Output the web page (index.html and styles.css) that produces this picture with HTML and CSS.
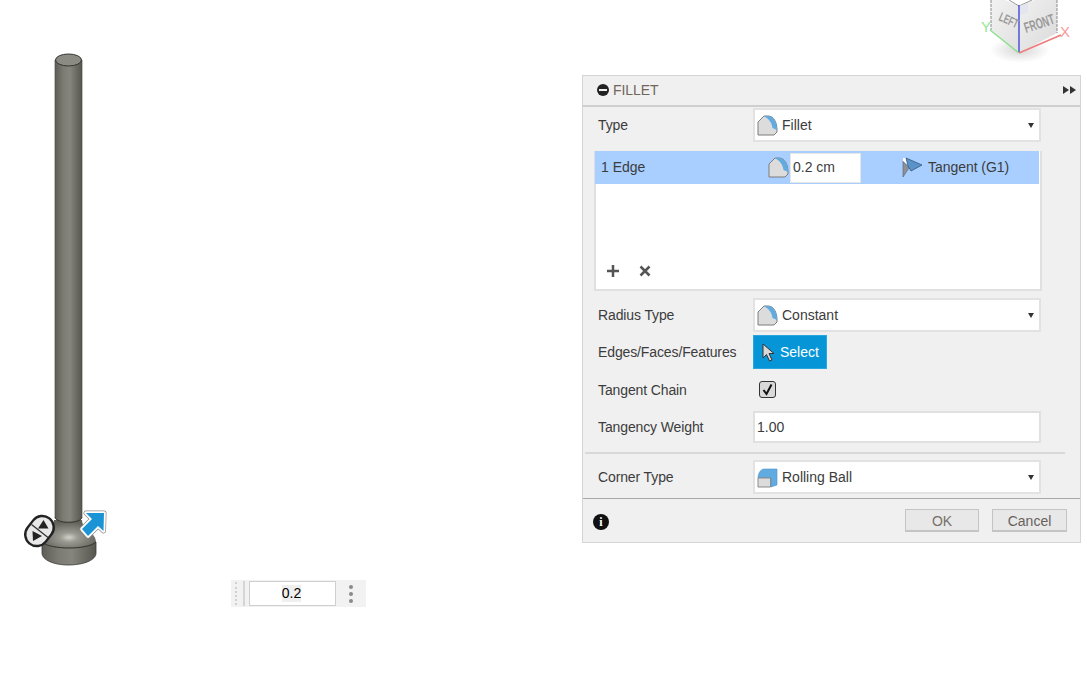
FILE: index.html
```html
<!DOCTYPE html>
<html lang="en">
<head>
<meta charset="utf-8">
<title>Fillet</title>
<link rel="stylesheet" href="styles.css">
</head>
<body>
<main class="canvas">
  <svg class="viewcube" width="112" height="70" viewBox="975 0 112 70">
    <defs>
      <linearGradient id="leftFace" x1="0" y1="0" x2="1" y2="1"><stop offset="0" stop-color="#f2f2f2"/><stop offset="1" stop-color="#e0e0e0"/></linearGradient>
      <linearGradient id="rightFace" x1="0" y1="0" x2="1" y2="1"><stop offset="0" stop-color="#f0f0f0"/><stop offset="1" stop-color="#dadada"/></linearGradient>
      <radialGradient id="cubeShadow"><stop offset="0" stop-color="#999" stop-opacity=".4"/><stop offset="1" stop-color="#999" stop-opacity="0"/></radialGradient>
    </defs>
    <ellipse cx="1020" cy="50" rx="30" ry="13" fill="url(#cubeShadow)"/>
    <path d="M991 0V30L1019 53V6L1005 0Z" fill="url(#leftFace)"/>
    <path d="M1057 0V33L1019 53V6L1034 0Z" fill="url(#rightFace)"/>
    <path d="M991 0V30M1057 0V33" stroke="#8a8a8a" stroke-width="1" stroke-dasharray="3 1" fill="none"/>
    <path d="M1009 0L1019 6L1032 0" stroke="#999" stroke-width="1" fill="none"/>
    <path d="M1019 6L1028 3V12L1019 16Z" fill="#e3e6ef"/>
    <path d="M1019 5V53" stroke="#4a55d8" stroke-width="1.5"/>
    <path d="M990 30L1019 53" stroke="#8fe08f" stroke-width="1.5"/>
    <path d="M1019 53L1061 35" stroke="#f07a7a" stroke-width="1.5"/>
    <text class="cube-label" transform="translate(998 20) rotate(24) scale(.8 1.25)">LEFT</text>
    <text class="cube-label cube-front" transform="translate(1026 33) rotate(-18) scale(.82 1.35)">FRONT</text>
    <text class="axis axis-y" x="981" y="32">Y</text>
    <text class="axis axis-x" x="1060" y="37">X</text>
  </svg>

  <svg class="model" width="100" height="530" viewBox="20 45 100 530">
    <defs>
      <linearGradient id="metal" x1="0" y1="0" x2="1" y2="0">
        <stop offset="0" stop-color="#5d5d56"/><stop offset=".3" stop-color="#7b7b74"/><stop offset=".55" stop-color="#85857e"/><stop offset="1" stop-color="#56564f"/>
      </linearGradient>
      <radialGradient id="flare" cx=".5" cy=".62" r=".55">
        <stop offset="0" stop-color="#d2d2ca"/><stop offset=".3" stop-color="#9a9a93"/><stop offset="1" stop-color="#62625b"/>
      </radialGradient>
    </defs>
    <path d="M42 542V553C42 560 54 565 68 565C84 565 96 560 96 553V542Z" fill="url(#metal)" stroke="#3b3b37" stroke-width=".8"/>
    <path d="M54 520C54 530 42 532 42 542C50 550 88 550 96 542C96 532 82 530 82 520Z" fill="url(#flare)"/>
    <path d="M42 542C50 550 88 550 96 542" fill="none" stroke="#33332f" stroke-width="1"/>
    <path d="M55 60H82V517C82 524 55 524 55 517Z" fill="url(#metal)"/>
    <path d="M55 517C55 524 82 524 82 517" fill="none" stroke="#33332f" stroke-width="1"/>
    <path d="M55 60V517M82 60V517" stroke="#4e4e48" stroke-width=".7"/>
    <ellipse cx="68.500" cy="60" rx="13" ry="6" fill="#8b8b84" stroke="#33332f" stroke-width="1"/>
    <rect class="handle-body" x="28" y="515" width="23" height="32" rx="11.500" transform="rotate(38 39.500 531)"/>
    <path d="M31.500 524.500L48 537.500" stroke="#333" stroke-width="1.300"/>
    <path d="M43.500 520L48.500 528.500H38Z" fill="#222"/>
    <path d="M32.500 531L42 536L33 541Z" fill="#222"/>
    <path class="arrow-edge" d="M86 513H104L103.500 531L98 526L88 536L82 529L92 519Z"/>
    <path class="arrow-rim" d="M86 513H104L103.500 531L98 526L88 536L82 529L92 519Z"/>
    <path class="arrow-fill" d="M86 513H104L103.500 531L98 526L88 536L82 529L92 519Z"/>
  </svg>

  <div class="floating-input">
    <span class="grip"></span>
    <span class="grip-line"></span>
    <div class="float-field"><span class="float-value">0.2</span></div>
    <span class="kebab"><i></i><i></i><i></i></span>
  </div>

  <section class="panel">
    <header class="panel-head">
      <span class="minus-icon"></span>
      <span class="panel-title">FILLET</span>
      <span class="expand">
        <svg width="13" height="8" viewBox="0 0 13 8"><path d="M0 0L6 4L0 8ZM7 0L13 4L7 8Z" fill="#333"/></svg>
      </span>
    </header>
    <div class="panel-body">
      <div class="row row-type">
        <label class="label">Type</label>
        <div class="select">
          <svg class="icon" width="21" height="21" viewBox="0 0 21 21"><use href="#fillet-icon"/></svg>
          <span>Fillet</span><span class="caret"></span>
        </div>
      </div>
      <div class="list">
        <div class="list-row">
          <span class="edge-name">1 Edge</span>
          <svg class="icon edge-icon" width="21" height="21" viewBox="0 0 21 21"><use href="#fillet-icon"/></svg>
          <span class="edge-input">0.2 cm</span>
          <svg class="icon flag-icon" width="21" height="21" viewBox="0 0 21 21">
            <path d="M1 4L7 11L1 20Z" fill="#8c9198" stroke="#5b6068" stroke-width=".6"/>
            <path d="M1 1H4L6 8L1 4Z" fill="#fff"/>
            <path d="M4 1L20 8L9 14L6 9Z" fill="#5a93c9" stroke="#37597c" stroke-width=".8"/>
          </svg>
          <span class="edge-kind">Tangent (G1)</span>
        </div>
        <div class="list-tools">
          <svg width="14" height="14" viewBox="0 0 14 14"><path d="M7 1V13M1 7H13" stroke="#555" stroke-width="2.500"/></svg>
          <svg width="12" height="12" viewBox="0 0 12 12"><path d="M1.500 1.500L10.500 10.500M10.500 1.500L1.500 10.500" stroke="#555" stroke-width="2.500"/></svg>
        </div>
      </div>
      <div class="row row-radius">
        <label class="label">Radius Type</label>
        <div class="select">
          <svg class="icon" width="21" height="21" viewBox="0 0 21 21"><use href="#fillet-icon"/></svg>
          <span>Constant</span><span class="caret"></span>
        </div>
      </div>
      <div class="row row-edges">
        <label class="label">Edges/Faces/Features</label>
        <button class="select-btn" type="button">
          <svg width="14" height="19" viewBox="0 0 14 19"><path d="M1 1V15L4.500 11.500L7.500 18L10 17L7 10.500H12Z" fill="#d8d8d8" stroke="#333" stroke-width="1"/></svg>
          <span>Select</span>
        </button>
      </div>
      <div class="row row-check">
        <label class="label">Tangent Chain</label>
        <span class="checkbox">
          <svg width="13" height="13" viewBox="0 0 13 13"><path d="M2.500 7L5.500 11L10.500 1.500" fill="none" stroke="#111" stroke-width="2"/></svg>
        </span>
      </div>
      <div class="row row-weight">
        <label class="label">Tangency Weight</label>
        <div class="text-field">1.00</div>
      </div>
      <div class="separator"></div>
      <div class="row row-corner">
        <label class="label">Corner Type</label>
        <div class="select">
          <svg class="icon" width="21" height="21" viewBox="0 0 21 21">
            <path d="M1 11C1 6 4 2 7 2H20V18L14 20V11Z" fill="#62abe0" stroke="#4d93cb" stroke-width=".6"/>
            <path d="M1 11H13.500V20H1Z" fill="#dcdcdc" stroke="#8b8b8b"/>
          </svg>
          <span>Rolling Ball</span><span class="caret"></span>
        </div>
      </div>
    </div>
    <footer class="panel-foot">
      <span class="info-icon">i</span>
      <button class="btn btn-ok" type="button">OK</button>
      <button class="btn btn-cancel" type="button">Cancel</button>
    </footer>
  </section>

  <svg class="defs" width="0" height="0">
    <defs>
      <symbol id="fillet-icon" viewBox="0 0 21 21">
        <path d="M1 7L7 1H11C17 1 20 8 20 15V17L17 20H1Z" fill="#dcdcdc" stroke="#7d7d7d" stroke-width="1"/>
        <path d="M8 1H11C17 1 20 8 20 15L15.500 13C15 8 12 4 8 2Z" fill="#62abe0"/>
      </symbol>
    </defs>
  </svg>
</main>
</body>
</html>
```
FILE: styles.css
```css
* { box-sizing: border-box; }
html, body { margin: 0; height: 100%; background: #fff; overflow: hidden; }
body { font-family: "Liberation Sans", Arial, sans-serif; font-size: 14px; color: #3c3c3c; }
.canvas { position: relative; width: 1087px; height: 683px; overflow: hidden; }
.defs { position: absolute; }

.viewcube { position: absolute; left: 975px; top: 0; }
.cube-label { font: bold 10px "Liberation Sans", Arial, sans-serif; fill: #999; }
.cube-front { font-size: 11px; }
.axis { font: 15px "Liberation Sans", Arial, sans-serif; }
.axis-y { fill: #8fe88f; }
.axis-x { fill: #f79a9a; }

.model { position: absolute; left: 20px; top: 45px; }
.handle-body { fill: #e8e8e8; stroke: #222; stroke-width: 2.4px; }
.arrow-edge { fill: none; stroke: #8a8a8a; stroke-width: 5px; stroke-linejoin: round; }
.arrow-rim { fill: none; stroke: #fff; stroke-width: 3.6px; stroke-linejoin: round; }
.arrow-fill { fill: #1b94d6; }

.floating-input { position: absolute; left: 231px; top: 580px; width: 135px; height: 27px; background: #f2f2f2; display: flex; align-items: center; }
.grip { width: 5px; height: 23px; margin-left: 4px; border-left: 2px dotted #d0d0d0; }
.grip-line { width: 2px; height: 25px; margin-left: 3px; background: #d5d5d5; }
.float-field { width: 87px; height: 25px; margin-left: 4px; padding-right: 2px; background: #fff; border: 1px solid #cfcfcf; display: flex; align-items: center; justify-content: center; color: #000; }
.float-value { background: #efefef; line-height: 17px; }
.kebab { display: flex; flex-direction: column; gap: 3px; margin-left: 13px; }
.kebab i { width: 4px; height: 4px; border-radius: 50%; background: #8a8a8a; }

.panel { position: absolute; left: 582px; top: 75px; width: 499px; height: 468px; background: #f0f0f0; border: 1px solid #d4d4d4; display: flex; flex-direction: column; }
.panel-head { height: 31px; flex: none; border-bottom: 2px solid #cfcfcf; display: flex; align-items: center; padding: 0 0 1px 14px; }
.minus-icon { width: 12px; height: 12px; border-radius: 50%; background: #222; position: relative; }
.minus-icon::after { content: ""; position: absolute; left: 2px; right: 2px; top: 5px; height: 2px; background: #f0f0f0; }
.panel-title { margin-left: 4px; color: #71665c; letter-spacing: -.05px; }
.expand { margin-left: auto; margin-right: 4px; display: flex; }

.panel-body { flex: 1; display: flex; flex-direction: column; }
.row { display: flex; align-items: center; padding-left: 15px; flex: none; }
.label { width: 155px; flex: none; letter-spacing: -.12px; }
.select { width: 288px; height: 34px; background: #fff; border: 2px solid #e2e2e2; display: flex; align-items: center; padding-left: 2px; gap: 4px; position: relative; }
.caret { position: absolute; right: 5px; top: 13px; width: 0; height: 0; border: 3.500px solid transparent; border-top: 5px solid #333; border-bottom: 0; }
.icon { flex: none; }
.row-type { margin-top: 1px; }
.list { margin: 9px 0 0 11px; width: 448px; height: 140px; flex: none; background: #fff; border: 2px solid #e0e0e0; border-top: 0; position: relative; }
.list-row { height: 33px; background: #a8cfff; display: flex; align-items: center; margin: 0 1px 0 -1px; padding-left: 1px; }
.edge-name { margin: 0 0 2px 5px; width: 167px; }
.edge-input { width: 71px; height: 30px; background: #fff; border: 1px solid #e6e6e6; display: flex; align-items: center; padding: 0 0 2px 2px; }
.edge-icon { margin-right: 1px; }
.flag-icon { margin-left: 41px; }
.edge-kind { margin: 0 0 2px 5px; letter-spacing: -.05px; }
.list-tools { position: absolute; left: 10px; bottom: 11px; display: flex; align-items: center; gap: 19px; }
.row-radius { margin-top: 7px; }
.row-edges { margin-top: 3px; }
.select-btn { width: 74px; height: 34px; background: #0696d7; border: 1px solid #2aa6df; color: #fff; font: 14px "Liberation Sans", Arial, sans-serif; display: flex; align-items: center; padding: 0 0 0 8px; gap: 4px; }
.row-check { margin-top: 4px; height: 34px; }
.checkbox { width: 17px; height: 17px; margin: 0 0 2px 6px; background: #d9d9d9; border: 1px solid #333; border-radius: 3px; display: flex; align-items: center; justify-content: center; }
.row-weight { margin-top: 4px; }
.text-field { width: 288px; height: 32px; background: #fff; border: 2px solid #e0e0e0; display: flex; align-items: center; padding-left: 2px; }
.separator { margin: 9px 15px 0 2px; height: 2px; background: #d8d8d8; flex: none; }
.row-corner { margin-top: 6px; }

.panel-foot { height: 44px; flex: none; border-top: 1px solid #a8a8a8; display: flex; align-items: center; position: relative; padding-left: 10px; }
.info-icon { width: 16px; height: 16px; margin-top: 2px; border-radius: 50%; background: #111; color: #fff; font: bold 12px/16px "Liberation Serif", serif; text-align: center; }
.btn { height: 23px; background: #e8e8e8; border: 1px solid #c4c4c4; border-bottom-width: 2px; font: 14px "Liberation Sans", Arial, sans-serif; padding: 1px 0 0; }
.btn-ok { width: 74px; margin-left: 296px; color: #77706a; }
.btn-cancel { width: 75px; margin-left: 13px; color: #67615c; }
```
